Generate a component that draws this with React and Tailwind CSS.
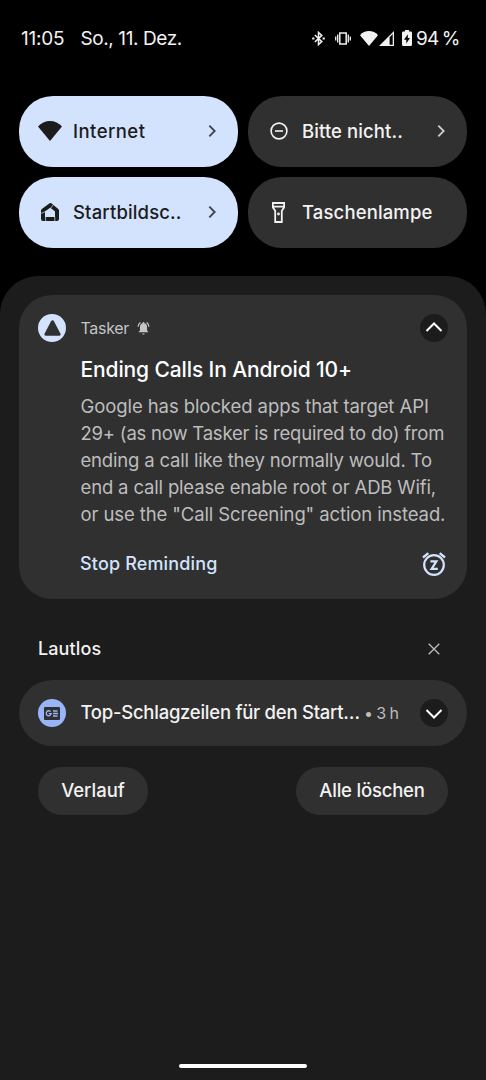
import React from 'react';

const Chevron = ({ d, className }) => (
  <svg viewBox="0 0 24 24" fill="none" stroke="currentColor" className={className}>
    <path d={d} />
  </svg>
);

const WifiIcon = ({ className }) => (
  <svg viewBox="0 0 24 20" fill="currentColor" className={className}>
    <path d="M12 20L0 5.5C3 2 7.5 0 12 0s9 2 12 5.5L12 20z" />
  </svg>
);

const HomeIcon = () => (
  <svg width="18" height="18" viewBox="0 0 18 18" fill="none">
    <path d="M2 7.5L9.4 2.1L16 7.5V16H2z" stroke="currentColor" strokeWidth="4" strokeLinejoin="round" />
    <path d="M13 1L9.6 5.2M0 10.4L5 8.4M4.6 13.6V18M13.8 13.6V18" stroke="#d3e3fd" strokeWidth="0.7" />
  </svg>
);

const DndIcon = () => (
  <svg width="18" height="18" viewBox="0 0 18 18" fill="none" stroke="currentColor" strokeWidth="1.6">
    <circle cx="9" cy="9" r="7.9" />
    <path d="M5 9h8" />
  </svg>
);

const TorchIcon = () => (
  <svg width="13" height="21" viewBox="0 0 13 21" fill="none" stroke="currentColor" strokeWidth="1.8">
    <path d="M.9 1H12.1V5.4L9.8 8.8V20H3.2V8.8L.9 5.4zM.9 4.6H12.1" />
    <circle cx="6.5" cy="12" r="1.4" fill="currentColor" stroke="none" />
  </svg>
);

const Tile = ({ icon, label, active, arrow, spacing }) => (
  <div
    className={`flex h-[71px] items-center rounded-[34px] pb-px pl-[18.5px] pr-[18.5px] ${
      active ? 'bg-[#d3e3fd] text-[#1c1c1c]' : 'bg-[#303030] text-[#f2f2f2]'
    }`}
  >
    <span className="flex w-6 shrink-0 justify-center">{icon}</span>
    <span className={`ml-[11.5px] flex-1 whitespace-nowrap pb-px text-[18.5px] font-medium leading-6 ${spacing}`}>{label}</span>
    {arrow && <Chevron d="M8 4l8 8-8 8" className="h-4 w-4 stroke-[2.8] opacity-80" />}
  </div>
);

const StatusBar = () => (
  <div className="flex h-[76px] items-center pl-[21px] pr-[27px] text-[19px] text-[#f2f2f2]">
    <span className="w-[59.5px] pt-0.5 tracking-[-0.2px]">11:05</span>
    <span className="whitespace-nowrap pt-0.5 tracking-[-0.4px]">So., 11. Dez.</span>
    <div className="ml-auto flex items-center">
      <svg width="13" height="15" viewBox="0 0 13 15" fill="none" stroke="currentColor" strokeWidth="1.5" className="mr-[10px]">
        <path d="M2.8 4L9.8 10.6 6.5 13.6V1.4L9.8 4.4 2.8 11" />
        <path d="M.2 7.5H2.4M10.6 7.5H12.8" strokeWidth="1.8" />
      </svg>
      <svg width="16" height="13" viewBox="0 0 16 13" fill="none" stroke="currentColor" className="mr-[9px]">
        <rect x="4.8" y="1" width="6.4" height="11" strokeWidth="1.5" />
        <path d="M2.7 2.5v8M13.3 2.5v8M.7 4.5v4M15.3 4.5v4" strokeWidth="1.3" />
      </svg>
      <WifiIcon className="h-[15px] w-[18px]" />
      <svg width="15" height="15" viewBox="0 0 15 15" fill="currentColor" className="ml-px mr-2">
        <path fillRule="evenodd" d="M15 0V15H0zM10.6 6.2V13.7H13.7V3.1z" />
      </svg>
      <svg width="10" height="16" viewBox="0 0 10 16" className="mr-[5px]">
        <path d="M3 0H7V1.6H8.8Q10 1.6 10 2.8V14.8Q10 16 8.8 16H1.2Q0 16 0 14.8V2.8Q0 1.6 1.2 1.6H3z" fill="currentColor" />
        <path d="M5.8 4.2V8H8L4.3 13.6V9.7H2z" fill="#000" />
      </svg>
      <span className="-ml-px mr-px w-[42px] whitespace-nowrap pt-0.5 tracking-[-0.7px] [word-spacing:-1.5px]">94&nbsp;%</span>
    </div>
  </div>
);

const bodyLines = [
  { text: 'Google has blocked apps that target API', spacing: 'tracking-[-0.08px]' },
  { text: '29+ (as now Tasker is required to do) from', spacing: 'tracking-[-0.21px]' },
  { text: 'ending a call like they normally would. To', spacing: 'tracking-[-0.18px]' },
  { text: 'end a call please enable root or ADB Wifi,', spacing: 'tracking-[-0.16px]' },
  { text: 'or use the "Call Screening" action instead.', spacing: 'tracking-[-0.11px]' },
];

const TaskerCard = () => (
  <article className="h-[304px] rounded-[33px] bg-[#303030] px-[19px] pt-[19px]">
    <header className="flex h-7 items-center">
      <span className="flex h-7 w-7 items-center justify-center rounded-full bg-[#d3e3fd]">
        <svg width="17" height="16" viewBox="0 0 17 16" fill="#303030">
          <path d="M7.3 .8Q8.5-.5 9.7 .8L16.5 13.8Q17 15.6 15.4 15.8H1.6Q0 15.6 .5 13.8z" />
        </svg>
      </span>
      <span className="ml-[14.5px] text-[16px] tracking-[-0.3px] text-[#c4c4c4]">Tasker</span>
      <svg width="13" height="13" viewBox="0 0 24 24" fill="#c4c4c4" className="ml-2 scale-[1.1]">
        <path d="M7.6 2.6L6.2 1.2C3.8 3 2.2 5.9 2 9h2c.15-2.65 1.5-4.97 3.6-6.4zM20 9h2c-.15-3.1-1.7-6-4.2-7.8l-1.4 1.4C18.5 4 19.9 6.35 20 9zM18 9.5c0-3.1-1.6-5.6-4.5-6.3V2.5C13.5 1.7 12.8 1 12 1s-1.5.7-1.5 1.5v.7C7.6 3.9 6 6.4 6 9.5v6l-2 2v1h16v-1l-2-2v-6zM12 22.5c1.1 0 2-.9 2-2h-4c0 1.1.9 2 2 2z" />
      </svg>
      <span className="ml-auto flex h-7 w-7 items-center justify-center rounded-full bg-[#1c1c1c] text-white">
        <Chevron d="M4.5 15L12 7.5l7.5 7.5" className="h-6 w-6 stroke-2" />
      </span>
    </header>
    <div className="pl-[42.5px]">
      <h2 className="mt-[14px] whitespace-nowrap text-[21px] font-medium leading-7 tracking-[-0.12px] text-white">
        Ending Calls In Android 10+
      </h2>
      <div className="mt-[9px] text-[18.5px] leading-[27px] text-[#bdbdbd]">
        {bodyLines.map(({ text, spacing }) => (
          <p key={text} className={`whitespace-nowrap ${spacing}`}>{text}</p>
        ))}
      </div>
    </div>
    <footer className="mt-[22px] flex h-7 items-center justify-between pl-[42px]">
      <span className="pb-px text-[18px] font-medium tracking-[0.15px] text-[#d3e3fd]">Stop Reminding</span>
      <svg width="24" height="26" viewBox="0 0 24 26" fill="none" stroke="#d3e3fd" className="mr-0.5">
        <circle cx="12" cy="14" r="9.8" strokeWidth="2.2" />
        <path d="M1 6.5L6.3 2.2M23 6.5L17.7 2.2" strokeWidth="2.3" />
        <path d="M8.4 10.4H14.4L9.6 17.8H15.8" strokeWidth="2.2" />
      </svg>
    </footer>
  </article>
);

const NewsCard = () => (
  <article className="flex h-[66px] items-center rounded-[33px] bg-[#303030] px-[19px]">
    <span className="flex h-7 w-7 shrink-0 items-center justify-center rounded-full bg-[#98b5f7]">
      <svg width="16" height="13" viewBox="0 0 16 13" fill="none" stroke="#98b5f7" strokeWidth="1.3">
        <rect width="16" height="13" rx="1" fill="#303030" stroke="none" />
        <path d="M6.6 4.6A2.5 2.5 0 1 0 7.2 6.7H4.8M9 4h4.5M9 6.5h5M9 9h4.5" />
      </svg>
    </span>
    <span className="ml-[14.5px] w-[280px] whitespace-nowrap text-[18.5px] font-medium tracking-[-0.26px] text-[#f2f2f2]">
      Top-Schlagzeilen für den Start…
    </span>
    <span className="ml-[3.5px] whitespace-nowrap text-[16px] tracking-[-0.6px] text-[#bdbdbd]">• 3 h</span>
    <span className="ml-auto flex h-7 w-7 shrink-0 items-center justify-center rounded-full bg-[#1c1c1c] text-white">
      <Chevron d="M4.5 9L12 16.5l7.5-7.5" className="h-6 w-6 stroke-2" />
    </span>
  </article>
);

const App = () => (
  <div className="flex h-[1080px] w-[486px] flex-col overflow-hidden bg-black font-['Inter','Roboto',sans-serif]">
    <StatusBar />
    <section className="mt-5 grid grid-cols-[219px_219px] gap-x-[10px] gap-y-[10px] px-[19px]">
      <Tile active arrow label="Internet" spacing="tracking-[0.45px]" icon={<WifiIcon className="h-5 w-6" />} />
      <Tile arrow label="Bitte nicht.." spacing="tracking-[0.1px]" icon={<DndIcon />} />
      <Tile active arrow label="Startbildsc.." spacing="tracking-[0.15px]" icon={<HomeIcon />} />
      <Tile label="Taschenlampe" spacing="tracking-[0.13px]" icon={<TorchIcon />} />
    </section>
    <main className="mt-7 flex flex-1 flex-col rounded-t-[38px] bg-[#1c1c1c] px-[19px] pt-[19px]">
      <TaskerCard />
      <div className="flex h-[81px] items-center justify-between px-[19px] pt-[18px]">
        <span className="text-[18px] font-medium tracking-[0.1px] text-[#f2f2f2]">Lautlos</span>
        <svg width="12" height="12" viewBox="0 0 12 12" stroke="#bdbdbd" strokeWidth="1.3" className="mr-2">
          <path d="M.7 .7L11.3 11.3M11.3 .7L.7 11.3" />
        </svg>
      </div>
      <NewsCard />
      <div className="mt-[21px] flex justify-between px-[19px] text-[18.5px] font-medium text-[#f2f2f2]">
        <button className="h-12 w-[110px] rounded-full bg-[#303030]">Verlauf</button>
        <button className="h-12 w-[152px] whitespace-nowrap rounded-full bg-[#303030] tracking-[-0.2px]">Alle löschen</button>
      </div>
      <div className="mb-3 mt-auto h-1 w-32 self-center rounded-full bg-white" />
    </main>
  </div>
);

export default App;
